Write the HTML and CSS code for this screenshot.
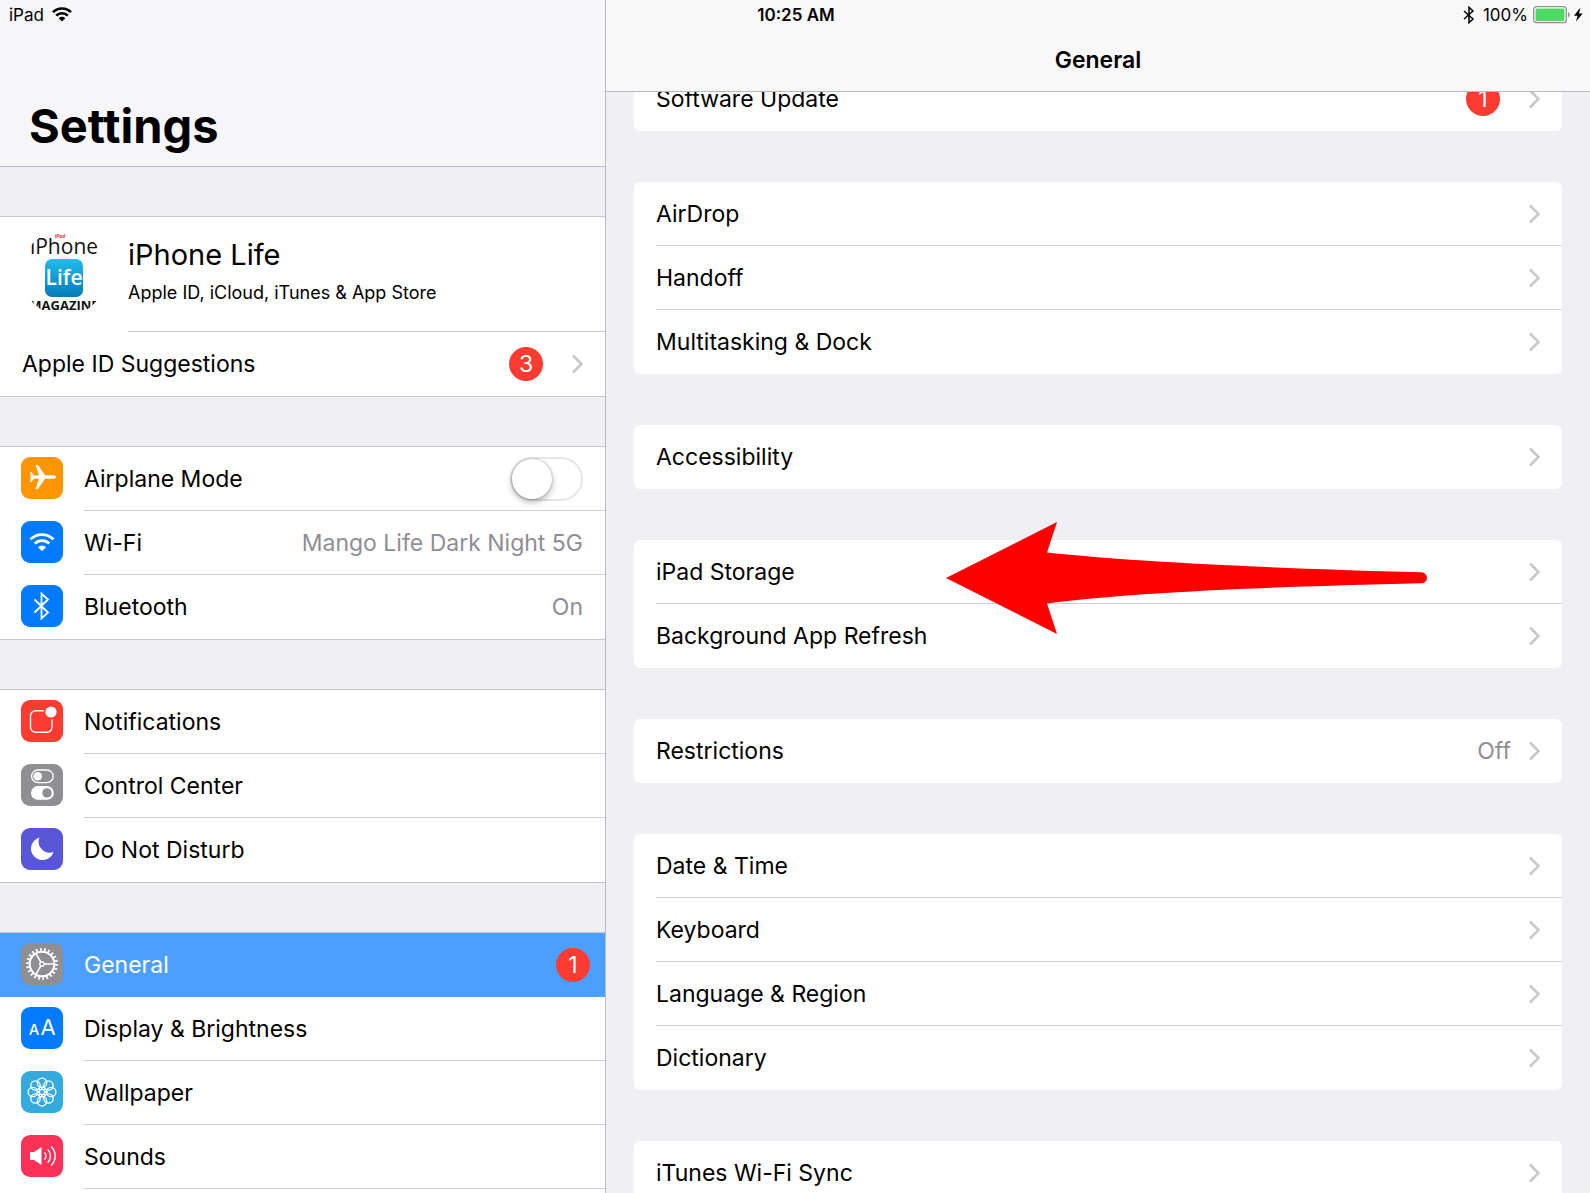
FILE: index.html
```html
<!DOCTYPE html>
<html lang="en">
<head>
<meta charset="utf-8">
<meta name="viewport" content="width=device-width, initial-scale=1">
<title>Settings</title>
<link rel="stylesheet" href="styles.css">
</head>
<body>
<svg class="defs" aria-hidden="true">
  <symbol id="chevron" viewBox="0 0 11 20"><path d="M1 1.500 9.500 10l-8.500 8.500" fill="none" stroke="#c7c7cc" stroke-width="2.500"/></symbol>
</svg>

<div class="status">
  <div class="status-left">
    <span>iPad</span>
    <svg width="20" height="15" viewBox="0 0 20 15" fill="none" stroke="#000" stroke-width="2.600"><path d="M1 5.200a12.700 12.700 0 0 1 18 0"/><path d="M4.200 8.600a8.200 8.200 0 0 1 11.600 0"/><path d="M10 14.500 6.700 11.200a4.700 4.700 0 0 1 6.600 0z" fill="#000" stroke="none"/></svg>
  </div>
  <time class="status-time">10:25 AM</time>
  <div class="status-right">
    <svg width="12" height="18" viewBox="0 0 12 18" fill="none" stroke="#000" stroke-width="1.500"><path d="M1 5l9 8-4 3.700V1.300L10 5l-9 8"/></svg>
    <span class="percent">100%</span>
    <svg width="50" height="18" viewBox="0 0 50 18"><rect x=".7" y=".7" width="32.600" height="16" rx="3" fill="#fff" stroke="#8e8e93" stroke-width="1.300"/><rect x="2.500" y="2.500" width="29" height="12.400" rx="1.500" fill="#4cd964"/><path d="M35 6.200c2.200.6 2.200 4.400 0 5z" fill="#8e8e93"/><path d="M47.500 1.500 41 9.800h3.600L43 15.500l6.700-8H46z" fill="#000"/></svg>
  </div>
</div>

<div class="app">
  <aside class="sidebar">
    <header class="sidebar-head"><h1>Settings</h1></header>
    <nav class="sidebar-list" aria-label="Settings">
      <section class="group">
        <a class="profile" href="#account">
          <svg class="avatar" viewBox="0 0 84 84" aria-hidden="true">
            <defs>
              <clipPath id="round"><circle cx="42" cy="42" r="43"/></clipPath>
              <linearGradient id="sky" x1="0" y1="0" x2="0" y2="1"><stop offset="0" stop-color="#20bdec"/><stop offset="1" stop-color="#0779b9"/></linearGradient>
            </defs>
            <g clip-path="url(#round)">
              <text class="logo-name" x="42" y="23" text-anchor="middle">iPhone</text>
              <text class="logo-pad" x="38" y="7" text-anchor="middle">iPad</text>
              <rect x="23" y="28" width="38" height="38" rx="7" fill="url(#sky)"/>
              <text class="logo-life" x="42" y="54" text-anchor="middle">Life</text>
              <text class="logo-mag" x="42" y="79" text-anchor="middle">MAGAZINE</text>
            </g>
          </svg>
          <span class="profile-body">
            <span class="profile-name">iPhone Life</span>
            <span class="profile-sub">Apple ID, iCloud, iTunes &amp; App Store</span>
          </span>
        </a>
        <a class="row plain" href="#suggestions"><span class="cell"><span class="label">Apple ID Suggestions</span><span class="badge">3</span><svg class="chev after-badge"><use href="#chevron"/></svg></span></a>
      </section>

      <section class="group">
        <div class="row">
          <svg class="icon orange" viewBox="0 0 42 42"><path fill="#fff" d="M35 20c0-1-1-1.700-2.500-1.700H24L17 8h-2.500L18 18.300l-5 .2L10.500 15H9l.8 5L9 25h1.500l2.500-3.500 5 .2L14.500 32H17l7-10.300h8.500C34 21.700 35 21 35 20z"/></svg>
          <span class="cell"><label class="label" for="airplane">Airplane Mode</label><input class="switch" type="checkbox" id="airplane"></span>
        </div>
        <a class="row" href="#wifi">
          <svg class="icon blue" viewBox="0 0 42 42" fill="none" stroke="#fff" stroke-width="2.800"><path d="M9.500 18.300a16.300 16.300 0 0 1 23 0"/><path d="M13.700 22.600a10.300 10.300 0 0 1 14.600 0"/><path d="M21 30.300l-4-4a5.600 5.600 0 0 1 8 0z" fill="#fff" stroke="none"/></svg>
          <span class="cell"><span class="label">Wi-Fi</span><span class="value">Mango Life Dark Night 5G</span></span>
        </a>
        <a class="row" href="#bluetooth">
          <svg class="icon blue" viewBox="0 0 42 42" fill="none" stroke="#fff" stroke-width="1.800"><path d="M13.500 14.500 27 27.500l-6.500 6V8.500l6.500 6-13.500 13"/></svg>
          <span class="cell"><span class="label">Bluetooth</span><span class="value">On</span></span>
        </a>
      </section>

      <section class="group">
        <a class="row" href="#notifications">
          <svg class="icon red" viewBox="0 0 42 42"><rect x="9.500" y="10.700" width="21.500" height="21.500" rx="5" fill="none" stroke="#fff" stroke-width="1.400"/><circle cx="30" cy="12" r="7.500" fill="#fe3b30"/><circle cx="30" cy="12" r="5.600" fill="#fff"/></svg>
          <span class="cell"><span class="label">Notifications</span></span>
        </a>
        <a class="row" href="#control-center">
          <svg class="icon gray" viewBox="0 0 42 42"><rect x="10.600" y="6" width="21.600" height="12.600" rx="6.300" fill="none" stroke="#fff" stroke-width="1.300"/><circle cx="16.700" cy="12.300" r="4.300" fill="#fff"/><rect x="10" y="22" width="22.800" height="13.800" rx="6.900" fill="#fff"/><circle cx="26" cy="28.900" r="4.700" fill="#8e8e93"/></svg>
          <span class="cell"><span class="label">Control Center</span></span>
        </a>
        <a class="row" href="#do-not-disturb">
          <svg class="icon purple" viewBox="0 0 42 42"><path fill="#fff" d="M18.500 9.500A11.500 11.500 0 1 0 32.500 24A11 11 0 0 1 18.500 9.500z"/></svg>
          <span class="cell"><span class="label">Do Not Disturb</span></span>
        </a>
      </section>

      <section class="group open">
        <a class="row selected" href="#general" aria-current="page">
          <svg class="icon gray" viewBox="0 0 42 42" fill="none" stroke="#fff"><circle cx="21" cy="21" r="12.300" stroke-width="2"/><circle cx="21" cy="21" r="14.500" stroke-width="3" pathLength="88" stroke-dasharray="1.700 2.300"/><circle cx="21" cy="21" r="2.200" stroke-width="1.300"/><path stroke-width="1.600" d="M23 21h10M20 19.300l-5.200-9M20 22.700l-5.200 9"/></svg>
          <span class="cell"><span class="label">General</span><span class="badge">1</span></span>
        </a>
        <a class="row" href="#display">
          <svg class="icon blue" viewBox="0 0 42 42"><text class="glyph-small" x="13" y="28" text-anchor="middle">A</text><text class="glyph-large" x="27" y="28" text-anchor="middle">A</text></svg>
          <span class="cell"><span class="label">Display &amp; Brightness</span></span>
        </a>
        <a class="row" href="#wallpaper">
          <svg class="icon cyan" viewBox="0 0 42 42" fill="none" stroke="#fff" stroke-width="1.300"><circle cx="21" cy="21" r="2.700"/><circle cx="21" cy="11.800" r="4.700"/><circle cx="27.500" cy="14.500" r="4.700"/><circle cx="30.200" cy="21" r="4.700"/><circle cx="27.500" cy="27.500" r="4.700"/><circle cx="21" cy="30.200" r="4.700"/><circle cx="14.500" cy="27.500" r="4.700"/><circle cx="11.800" cy="21" r="4.700"/><circle cx="14.500" cy="14.500" r="4.700"/><path d="M21 18.300v-3M22.900 19.100l2.200-2.200M23.700 21h3M22.900 22.900l2.200 2.200M21 23.700v3M19.100 22.900l-2.200 2.200M18.300 21h-3M19.100 19.100l-2.200-2.200"/></svg>
          <span class="cell"><span class="label">Wallpaper</span></span>
        </a>
        <a class="row" href="#sounds">
          <svg class="icon pink" viewBox="0 0 42 42" fill="none" stroke="#fff" stroke-width="1.500"><path d="M9 17h4l7.500-5v18L13 25H9z" fill="#fff" stroke="none"/><path d="M23.500 17.500c1.800 2 1.800 5 0 7M26.800 14.500c3.600 3.700 3.600 9.300 0 13M30.200 11.500c5.300 5.500 5.300 13.500 0 19"/></svg>
          <span class="cell"><span class="label">Sounds</span></span>
        </a>
      </section>
    </nav>
  </aside>

  <main class="detail">
    <header class="detail-head"><h2>General</h2></header>
    <div class="detail-list">
      <section class="card">
        <a class="row plain" href="#software"><span class="cell"><span class="label">Software Update</span><span class="badge">1</span><svg class="chev after-badge"><use href="#chevron"/></svg></span></a>
      </section>
      <section class="card">
        <a class="row plain" href="#airdrop"><span class="cell"><span class="label">AirDrop</span><svg class="chev"><use href="#chevron"/></svg></span></a>
        <a class="row plain" href="#handoff"><span class="cell"><span class="label">Handoff</span><svg class="chev"><use href="#chevron"/></svg></span></a>
        <a class="row plain" href="#multitasking"><span class="cell"><span class="label">Multitasking &amp; Dock</span><svg class="chev"><use href="#chevron"/></svg></span></a>
      </section>
      <section class="card">
        <a class="row plain" href="#accessibility"><span class="cell"><span class="label">Accessibility</span><svg class="chev"><use href="#chevron"/></svg></span></a>
      </section>
      <section class="card">
        <a class="row plain" href="#storage"><span class="cell"><span class="label">iPad Storage</span><svg class="chev"><use href="#chevron"/></svg></span></a>
        <a class="row plain" href="#refresh"><span class="cell"><span class="label">Background App Refresh</span><svg class="chev"><use href="#chevron"/></svg></span></a>
        <svg class="arrow" viewBox="0 0 481 112" aria-hidden="true"><path fill="#f00" d="M0 56 111 0l-10 30.500C190 40 320 46 475.500 50.300a5.500 5.500 0 0 1 0 11C320 65 190 70 101 81.500L111 112z"/></svg>
      </section>
      <section class="card">
        <a class="row plain" href="#restrictions"><span class="cell"><span class="label">Restrictions</span><span class="value">Off</span><svg class="chev"><use href="#chevron"/></svg></span></a>
      </section>
      <section class="card">
        <a class="row plain" href="#date"><span class="cell"><span class="label">Date &amp; Time</span><svg class="chev"><use href="#chevron"/></svg></span></a>
        <a class="row plain" href="#keyboard"><span class="cell"><span class="label">Keyboard</span><svg class="chev"><use href="#chevron"/></svg></span></a>
        <a class="row plain" href="#language"><span class="cell"><span class="label">Language &amp; Region</span><svg class="chev"><use href="#chevron"/></svg></span></a>
        <a class="row plain" href="#dictionary"><span class="cell"><span class="label">Dictionary</span><svg class="chev"><use href="#chevron"/></svg></span></a>
      </section>
      <section class="card">
        <a class="row plain" href="#itunes"><span class="cell"><span class="label">iTunes Wi-Fi Sync</span><svg class="chev"><use href="#chevron"/></svg></span></a>
      </section>
    </div>
  </main>
</div>
</body>
</html>
```
FILE: styles.css
```css
* { box-sizing: border-box; }

body {
  margin: 0;
  background: #efeff4;
  color: #000;
  font-family: Inter, "Liberation Sans", sans-serif;
  font-size: 23px;
  line-height: 30px;
}

a { color: inherit; text-decoration: none; }
h1, h2 { margin: 0; }
svg { display: block; flex: none; }
.defs { display: none; }

/* Status bar, laid over both panes */
.status {
  position: absolute;
  inset: 0 0 auto 0;
  z-index: 3;
  display: grid;
  grid-template-columns: 1fr auto 1fr;
  align-items: center;
  height: 29px;
  padding: 0 7px 0 9px;
  font-size: 17px;
  line-height: 24px;
}
.status-left { display: flex; align-items: center; gap: 8px; }
.status-time { font-weight: 600; }
.status-right { display: flex; align-items: center; justify-content: flex-end; }
.percent { margin: 0 5px 0 8px; }

.app {
  display: grid;
  grid-template-columns: 606fr 984fr;
  height: 100vh;
}

/* Sidebar */
.sidebar {
  display: flex;
  flex-direction: column;
  min-width: 0;
  min-height: 0;
  border-right: 1px solid #b9b9c0;
}
.sidebar-head {
  flex: none;
  padding: 97px 29px 12px;
  background: #f6f6f8;
  border-bottom: 1px solid #bcbad0;
}
h1 { font-size: 47px; line-height: 57px; font-weight: 700; }
.sidebar-list {
  display: flex;
  flex-direction: column;
  gap: 49px;
  flex: 1;
  min-height: 0;
  padding-top: 49px;
  overflow: auto;
  scrollbar-width: none;
}
.group {
  flex: none;
  background: #fff;
  border: solid #c8c7cc;
  border-width: 1px 0;
}

.profile {
  display: flex;
  gap: 22px;
  height: 115px;
  padding-left: 22px;
}
.avatar { width: 84px; height: 84px; margin-top: 14px; }
.profile-body {
  display: flex;
  flex-direction: column;
  flex: 1;
  gap: 8px;
  padding-top: 20px;
  border-bottom: 1px solid #c8c7cc;
}
.profile-name { font-size: 29px; line-height: 36px; }
.profile-sub { font-size: 18px; line-height: 24px; }

.logo-name { font: 21px "Open Sans", sans-serif; fill: #111; }
.logo-pad { font: italic 700 5px "Open Sans", sans-serif; fill: #e33; }
.logo-life { font: 600 21px "Open Sans", sans-serif; fill: #fff; }
.logo-mag { font: 700 13px "Open Sans", sans-serif; fill: #111; }
.glyph-small { font: 500 15px Inter, sans-serif; fill: #fff; }
.glyph-large { font: 400 22px Inter, sans-serif; fill: #fff; }

/* Rows, shared by both panes */
.row {
  display: flex;
  gap: 21px;
  height: 64px;
  padding-left: 21px;
}
.row.plain { padding-left: 22px; }
.cell {
  display: flex;
  align-items: center;
  flex: 1;
  min-width: 0;
  padding-right: 22px;
  border-bottom: 1px solid #d0cfd4;
}
.row:not(:has(+ .row)) .cell { border-bottom-color: transparent; }
.label { flex: 1; white-space: nowrap; }
.value { color: #8e8e93; white-space: nowrap; }

/* The last group runs on past the bottom of the window */
.open { flex: 1 0 auto; border-bottom: 0; }
.open .row:not(:has(+ .row)) .cell { border-bottom-color: #d0cfd4; }

.selected { background: #4d9fff; color: #fff; }
.selected .cell { padding-right: 15px; border-bottom-color: transparent; }

.icon { width: 42px; height: 42px; margin-top: 10px; border-radius: 9px; }
.orange { background: #ff9500; }
.blue { background: #007aff; }
.red { background: #fe3b30; }
.gray { background: #8e8e93; }
.purple { background: #5856d6; }
.cyan { background: #35aadc; }
.pink { background: #fc3158; }

.badge {
  width: 34px;
  height: 34px;
  border-radius: 50%;
  background: #fe3b30;
  color: #fff;
  line-height: 34px;
  text-align: center;
}
.chev { width: 11px; height: 20px; margin-left: 18px; }
.chev.after-badge { margin-left: 29px; }

.switch {
  appearance: none;
  display: flex;
  width: 73px;
  height: 44px;
  margin: 0;
  padding: 1px;
  border: 2px solid #e5e5e7;
  border-radius: 22px;
  background: #fff;
}
.switch::before {
  content: "";
  width: 40px;
  height: 40px;
  margin: -1px;
  border-radius: 50%;
  background: #fff;
  box-shadow: 0 3px 6px rgba(0, 0, 0, .3), 0 0 2px rgba(0, 0, 0, .35);
}
.switch:checked { justify-content: flex-end; background: #4cd964; }

/* Detail pane */
.detail {
  position: relative;
  min-width: 0;
  min-height: 0;
}
.detail-head {
  position: absolute;
  inset: 0 0 auto 0;
  z-index: 2;
  padding: 45px 0 16px;
  background: #f8f8f9;
  border-bottom: 1px solid #b9b9be;
  text-align: center;
}
h2 { font-size: 23px; line-height: 30px; font-weight: 600; }
.detail-list {
  display: flex;
  flex-direction: column;
  gap: 51px;
  height: 100%;
  padding: 67px 28px 0;
  overflow: auto;
  scrollbar-width: none;
}
.card {
  position: relative;
  flex: none;
  background: #fff;
  border-radius: 6px;
}
/* Marker pointing at the storage row */
.arrow {
  position: absolute;
  top: -18px;
  right: 135px;
  width: 481px;
  height: 112px;
}
```
